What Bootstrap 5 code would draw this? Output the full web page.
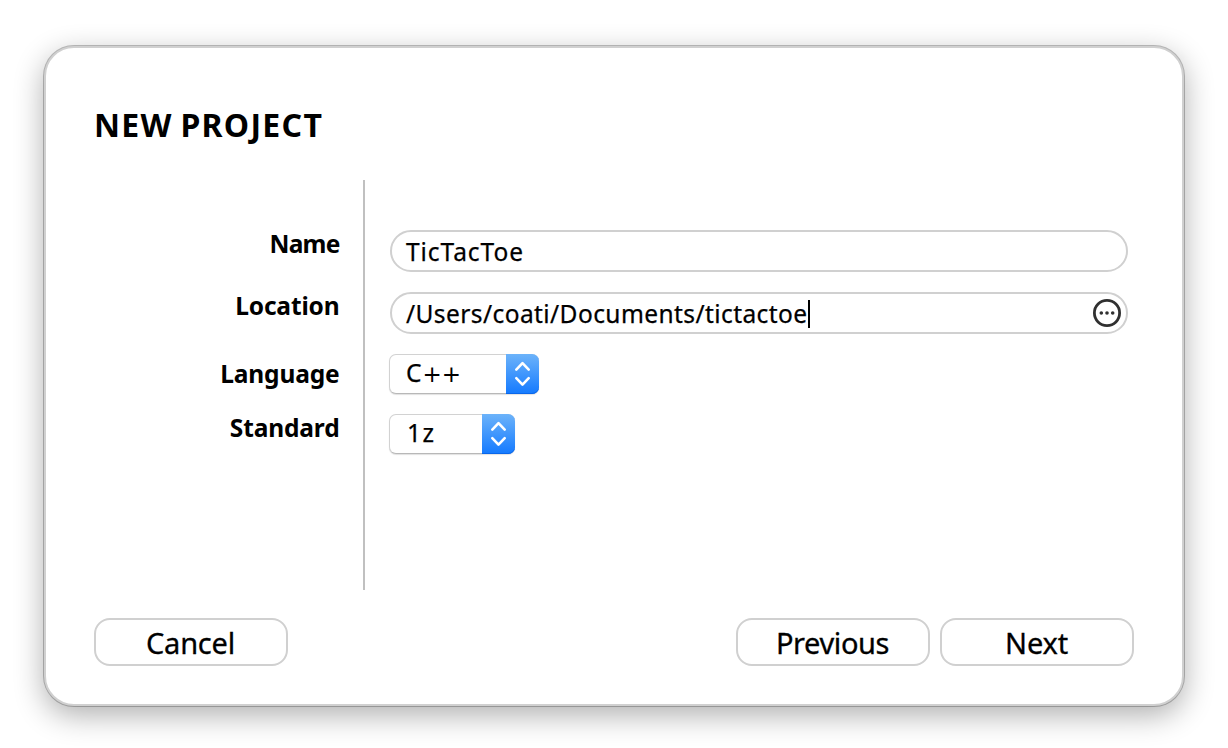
<!DOCTYPE html>
<html lang="en">
<head>
<meta charset="utf-8">
<meta name="viewport" content="width=device-width, initial-scale=1">
<title>New Project</title>
<link href="https://cdn.jsdelivr.net/npm/bootstrap@5.3.0/dist/css/bootstrap.min.css" rel="stylesheet">
<style>
body { background: #fff; color: #000; font-family: "Noto Sans", "Open Sans", sans-serif; height: 748px; overflow: hidden; padding: 46px 44px; }
.dialog { width: 1140px; height: 660px; border: 2px solid #d0d0d0; border-radius: 30px; padding: 0 48px 38px;
  box-shadow: 0 0 0 1px rgba(0,0,0,.24), 0 9px 30px rgba(0,0,0,.32); background: #fff; }
.dialog-title { font-size: 32px; line-height: 40px; font-weight: 700; margin: 57px 0 35px; white-space: nowrap; letter-spacing: 1.3px; word-spacing: -2px; }
.form-area { height: 410px; }
.label-column { width: 271px; border-right: 2px solid #c0c0c0; padding: 44px 23.5px 0 0; }
.label-column label { font-size: 24.5px; line-height: 40px; font-weight: 700; height: 40px; letter-spacing: -.15px; }
.label-column .name-label { letter-spacing: -.8px; }
.location-label { margin-top: 22px; }
.language-label { margin-top: 28px; }
.standard-label { margin-top: 14px; }
.field-column { padding: 50px 6px 0 25px; gap: 20px; }
.text-field { height: 42px; border: 2px solid #d0d0d0; border-radius: 21px; padding: 2px 4px 0 14px; font-size: 24.5px; line-height: 36px; background: #fff; color: #000; -webkit-text-stroke: .25px #000; }
.project-name { letter-spacing: .95px; }
.project-path { letter-spacing: .42px; }
.caret { width: 2px; height: 28px; background: #000; }
.picker { height: 40px; margin-left: -1px; border: 1px solid #d2d2d2; border-bottom-color: #b8b8b8; border-radius: 7px; box-shadow: 0 1px 1px rgba(0,0,0,.12); font-size: 24.5px; line-height: 36px; padding: 0 0 0 16px; background: #fff; color: #000; -webkit-text-stroke: .25px #000; }
.language-picker { width: 150px; letter-spacing: 1px; }
.plus-signs { font-family: "DejaVu Sans", sans-serif; font-size: 23px; letter-spacing: 0; line-height: 1; -webkit-text-stroke: 0; }
.standard-picker { width: 126px; letter-spacing: 1.4px; padding-left: 17px; }
.stepper { width: 33px; height: 40px; margin: -1px; border-radius: 0 7px 7px 0; background: linear-gradient(#6cb3fa, #147aff); box-shadow: inset 0 -1px 0 #0a67ea; }
.action { width: 194px; height: 48px; border: 2px solid #d0d0d0; border-radius: 16px; font-size: 29px; line-height: 43px; padding: 1px 1px 0 0; background: #fff; color: #000; letter-spacing: -.2px; -webkit-text-stroke: .3px #000; }
.action-wide { letter-spacing: -.4px; }
.actions { gap: 10px; }
.t { white-space: pre; display: inline-block; }
</style>
</head>
<body>
<main class="dialog d-flex flex-column">
  <h1 class="dialog-title">NEW PROJECT</h1>
  <section class="form-area d-flex">
    <div class="label-column d-flex flex-column align-items-end flex-shrink-0">
      <label class="name-label">Name</label>
      <label class="location-label">Location</label>
      <label class="language-label">Language</label>
      <label class="standard-label">Standard</label>
    </div>
    <div class="field-column d-flex flex-column flex-grow-1">
      <div class="form-control text-field d-flex align-items-center"><span class="t project-name">TicTacToe</span></div>
      <div class="form-control text-field d-flex align-items-center">
        <span class="t project-path">/Users/coati/Documents/tictactoe</span><span class="caret"></span>
        <svg class="ms-auto" width="30" height="30" viewBox="0 0 30 30"><circle cx="15" cy="14" r="12.6" fill="none" stroke="#303030" stroke-width="2.8"/><g fill="#303030"><circle cx="9.3" cy="14" r="1.8"/><circle cx="15" cy="14" r="1.8"/><circle cx="20.7" cy="14" r="1.8"/></g></svg>
      </div>
      <div class="picker language-picker d-flex justify-content-between"><span class="t">C<span class="plus-signs">++</span></span>
        <span class="stepper"><svg class="d-block" width="33" height="40" fill="none" stroke="#fff" stroke-width="2.6" stroke-linecap="round" stroke-linejoin="round"><path d="M10.3 15.6 16.5 9.2 22.7 15.6M10.3 24.2 16.5 30.6 22.7 24.2"/></svg></span></div>
      <div class="picker standard-picker d-flex justify-content-between"><span class="t">1z</span>
        <span class="stepper"><svg class="d-block" width="33" height="40" fill="none" stroke="#fff" stroke-width="2.6" stroke-linecap="round" stroke-linejoin="round"><path d="M10.3 15.6 16.5 9.2 22.7 15.6M10.3 24.2 16.5 30.6 22.7 24.2"/></svg></span></div>
    </div>
  </section>
  <footer class="actions d-flex mt-auto">
    <button class="btn action" type="button">Cancel</button>
    <button class="btn action action-wide ms-auto" type="button">Previous</button>
    <button class="btn action" type="button">Next</button>
  </footer>
</main>
<script src="https://cdn.jsdelivr.net/npm/bootstrap@5.3.0/dist/js/bootstrap.bundle.min.js"></script>
</body>
</html>
